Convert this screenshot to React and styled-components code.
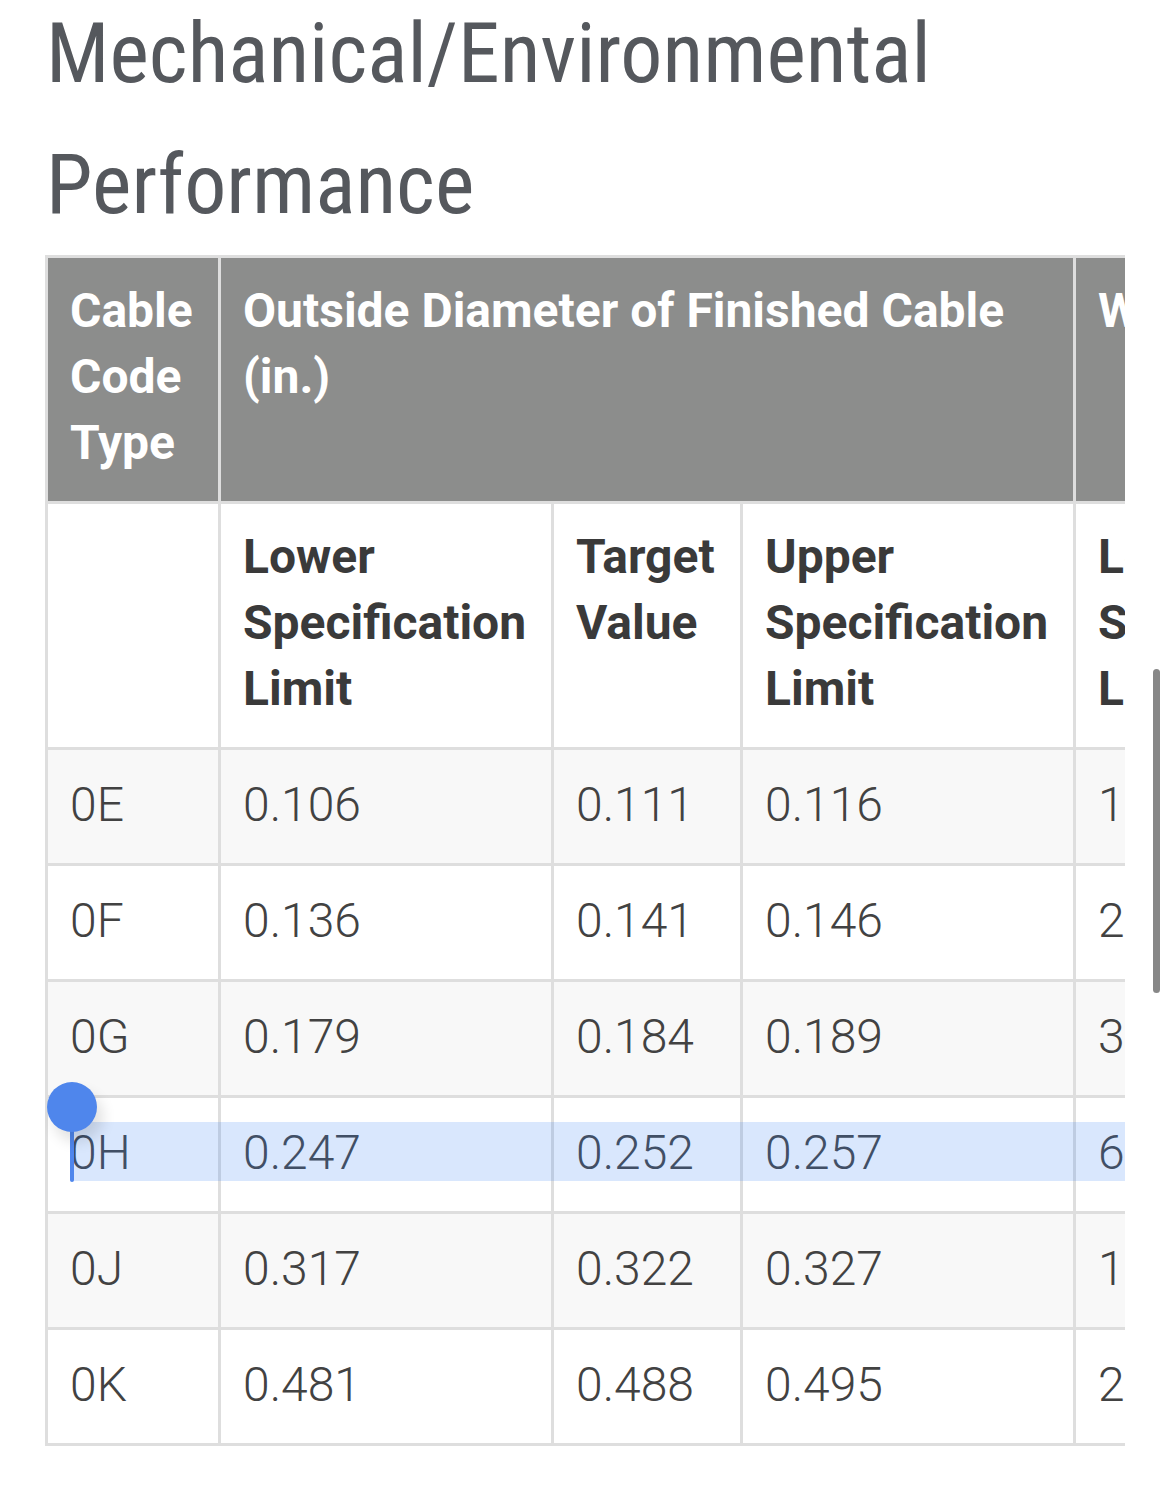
import styled, { createGlobalStyle } from 'styled-components';

const GlobalStyle = createGlobalStyle`
  html, body {
    margin: 0;
    padding: 0;
    background: #ffffff;
  }
  body {
    font-family: Roboto, "Liberation Sans", sans-serif;
    overflow: hidden;
  }
`;

const Page = styled.div`
  width: 1170px;
  height: 1508px;
  padding: 0 45px 0 45px;
  box-sizing: border-box;
  overflow: hidden;
`;

const Title = styled.h1`
  margin: -12px 0 5px 1px;
  font-family: "Roboto Condensed", Roboto, "Liberation Sans", sans-serif;
  font-stretch: condensed;
  font-weight: 400;
  font-size: 84px;
  line-height: 131px;
  color: #55585d;
`;

const Scroller = styled.div`
  width: 100%;
  overflow: hidden;
`;

const Table = styled.table`
  border-collapse: collapse;
  table-layout: fixed;
  width: 1900px;
  border-left: 3px solid #dedede;
  border-top: 3px solid #dedede;
`;

const HeadCell = styled.th`
  background: ${p => (p.$sub ? '#ffffff' : '#8c8d8c')};
  color: ${p => (p.$sub ? '#3a3a3a' : '#ffffff')};
  font-family: Roboto, "Liberation Sans", sans-serif;
  font-weight: 700;
  font-size: 48px;
  line-height: 66px;
  text-align: left;
  vertical-align: top;
  padding: 20px 20px 25px 22px;
  border: 3px solid #dedede;
  white-space: normal;
`;

const Row = styled.tr`
  background: ${p => (p.$shade ? '#f8f8f8' : '#ffffff')};
`;

const Cell = styled.td`
  position: relative;
  font-size: 48px;
  font-weight: 300;
  line-height: 66px;
  color: #424242;
  padding: 22px 20px 25px 22px;
  border: 3px solid #dedede;
  white-space: nowrap;
`;

const Selection = styled.span`
  position: absolute;
  left: 22px;
  top: 24px;
  width: 1100px;
  height: 59px;
  background: rgba(66, 133, 244, 0.2);
  z-index: 2;
  pointer-events: none;
`;

const Caret = styled.span`
  position: absolute;
  left: 22px;
  top: 20px;
  width: 4px;
  height: 64px;
  border-radius: 2px;
  background: #4f86ec;
  z-index: 3;
`;

const Handle = styled.span`
  position: absolute;
  left: -1px;
  top: -16px;
  width: 50px;
  height: 50px;
  border-radius: 50%;
  background: #4f86ec;
  box-shadow: 6px 10px 14px rgba(0, 0, 0, 0.12);
  z-index: 3;
`;

const ScrollThumb = styled.div`
  position: fixed;
  left: 1153px;
  top: 669px;
  width: 7px;
  height: 324px;
  border-radius: 4px;
  background: #878787;
`;

const widths = [173, 333, 189, 333, 333, 189, 350];

const rows = [
  ['0E', '0.106', '0.111', '0.116', '1.4', '1.6', '1.8'],
  ['0F', '0.136', '0.141', '0.146', '2.3', '2.6', '2.9'],
  ['0G', '0.179', '0.184', '0.189', '3.9', '4.3', '4.7'],
  ['0H', '0.247', '0.252', '0.257', '6.8', '7.4', '8.0'],
  ['0J', '0.317', '0.322', '0.327', '11.2', '12.1', '13.0'],
  ['0K', '0.481', '0.488', '0.495', '24.6', '26.0', '27.4'],
];

const subHeads = [
  'Lower Specification Limit',
  'Target Value',
  'Upper Specification Limit',
];

export default function App() {
  return (
    <Page>
      <GlobalStyle />
      <Title>Mechanical/Environmental Performance</Title>
      <Scroller>
        <Table>
          <colgroup>
            {widths.map((w, i) => (
              <col key={i} style={{ width: w }} />
            ))}
          </colgroup>
          <thead>
            <tr>
              <HeadCell>Cable Code Type</HeadCell>
              <HeadCell colSpan={3}>Outside Diameter of Finished Cable (in.)</HeadCell>
              <HeadCell colSpan={3}>Weight of Finished Cable (lbs/kft)</HeadCell>
            </tr>
            <tr>
              <HeadCell $sub />
              {[...subHeads, ...subHeads].map((t, i) => (
                <HeadCell $sub key={i}>{t}</HeadCell>
              ))}
            </tr>
          </thead>
          <tbody>
            {rows.map((r, i) => (
              <Row key={r[0]} $shade={i % 2 === 0}>
                {r.map((v, j) => (
                  <Cell key={j}>
                    {r[0] === '0H' && j === 0 && (
                      <>
                        <Selection />
                        <Caret />
                        <Handle />
                      </>
                    )}
                    {v}
                  </Cell>
                ))}
              </Row>
            ))}
          </tbody>
        </Table>
      </Scroller>
      <ScrollThumb />
    </Page>
  );
}
